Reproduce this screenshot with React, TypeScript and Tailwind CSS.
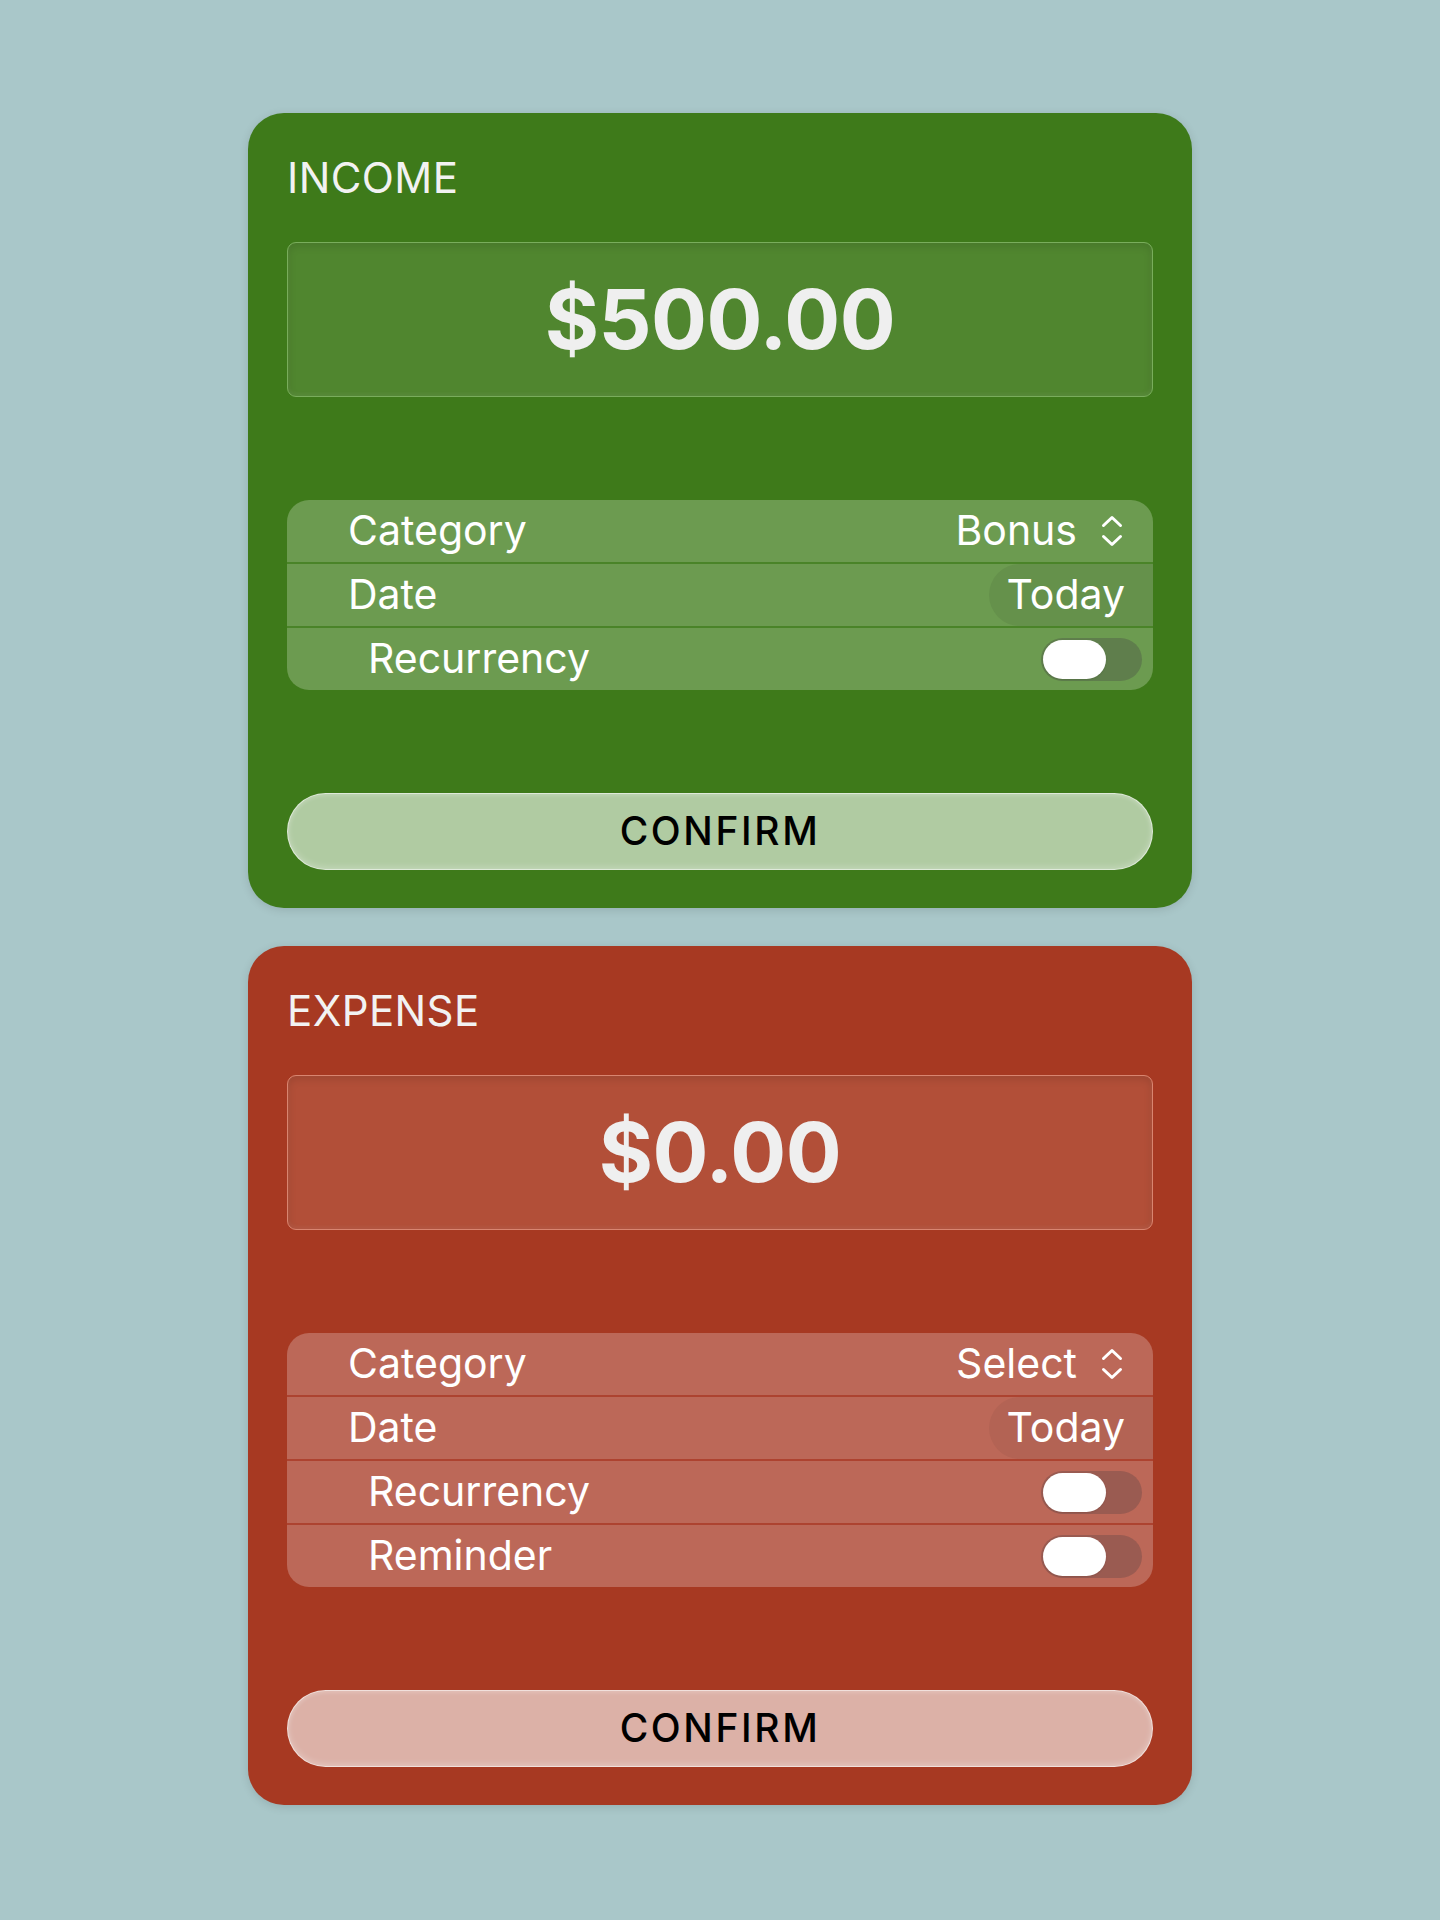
import React from "react";

type Theme = {
  card: string;
  box: string;
  list: string;
  sep: string;
  pill: string;
  track: string;
  button: string;
};

const green: Theme = {
  card: "bg-[#3e7a1a]",
  box: "bg-[#50862f] border-[#79ad5c]",
  list: "bg-[#6c9b50]",
  sep: "bg-[#4a8428]",
  pill: "bg-[#65914b]",
  track: "bg-[#5f7e4c]",
  button: "bg-[#b0cba2]",
};

const red: Theme = {
  card: "bg-[#a73922]",
  box: "bg-[#b24f38] border-[#d98570]",
  list: "bg-[#bc6858]",
  sep: "bg-[#ad4330]",
  pill: "bg-[#b36354]",
  track: "bg-[#9a5b51]",
  button: "bg-[#dcb1a7]",
};

function Chevrons() {
  return (
    <svg width="22" height="32" viewBox="0 0 22 32" fill="none" className="ml-[24px]">
      <path d="M2.5 10.5 L11 2.5 L19.5 10.5" stroke="white" strokeWidth="3" strokeLinecap="round" strokeLinejoin="round" />
      <path d="M2.5 21.5 L11 29.5 L19.5 21.5" stroke="white" strokeWidth="3" strokeLinecap="round" strokeLinejoin="round" />
    </svg>
  );
}

function Toggle({ t }: { t: Theme }) {
  return (
    <div className={`mr-[11px] flex h-[43px] w-[101px] items-center rounded-full px-[2px] ${t.track}`}>
      <div className="h-[39px] w-[63px] rounded-full bg-white shadow-[0_1px_2px_rgba(0,0,0,0.1)]" />
    </div>
  );
}

function Sep({ t }: { t: Theme }) {
  return <div className={`h-[2px] w-full ${t.sep}`} />;
}

function Card({
  title,
  amount,
  category,
  reminder,
  t,
}: {
  title: string;
  amount: string;
  category: string;
  reminder?: boolean;
  t: Theme;
}) {
  return (
    <div
      className={`w-[944px] rounded-[36px] px-[39px] pt-[40px] pb-[38px] text-white shadow-[0_2px_10px_rgba(0,0,0,0.12)] ${t.card}`}
    >
      <div className="text-[42px] leading-[50px] font-normal tracking-[0.4px] text-[#f2f2f2]">{title}</div>
      <div
        className={`mt-[39px] flex h-[155px] items-center justify-center rounded-[9px] border shadow-[inset_0_3px_8px_rgba(0,0,0,0.12),inset_0_-2px_4px_rgba(255,255,255,0.08)] ${t.box}`}
      >
        <span className="text-[83px] leading-none font-bold text-[#efefef] tracking-[-0.5px]">{amount}</span>
      </div>

      <div className={`mt-[103px] overflow-hidden rounded-[22px] ${t.list}`}>
        <div className="flex h-[62px] items-center pl-[61px] pr-[30px] text-[41px]">
          <span className="flex-1">Category</span>
          <span>{category}</span>
          <Chevrons />
        </div>
        <Sep t={t} />
        <div className="flex h-[62px] items-center pl-[61px] text-[41px]">
          <span className="flex-1">Date</span>
          <span className={`flex h-full items-center rounded-l-full pl-[18px] pr-[28px] ${t.pill}`}>Today</span>
        </div>
        <Sep t={t} />
        <div className="flex h-[62px] items-center pl-[81px] text-[41px]">
          <span className="flex-1">Recurrency</span>
          <Toggle t={t} />
        </div>
        {reminder && (
          <>
            <Sep t={t} />
            <div className="flex h-[62px] items-center pl-[81px] text-[41px]">
              <span className="flex-1">Reminder</span>
              <Toggle t={t} />
            </div>
          </>
        )}
      </div>

      <button
        className={`mt-[103px] flex h-[77px] w-full items-center justify-center rounded-full border border-white/60 text-[39px] font-medium tracking-[2.6px] text-black shadow-[inset_0_-2px_6px_rgba(255,255,255,0.25),inset_0_2px_4px_rgba(255,255,255,0.15)] ${t.button}`}
      >
        CONFIRM
      </button>
    </div>
  );
}

export default function App() {
  return (
    <div
      className="flex min-h-[1920px] w-full flex-col items-center gap-[38px] bg-[#a9c7c9] pt-[113px]"
      style={{ fontFamily: "Inter, 'Noto Sans', sans-serif" }}
    >
      <Card title="INCOME" amount="$500.00" category="Bonus" t={green} />
      <Card title="EXPENSE" amount="$0.00" category="Select" reminder t={red} />
    </div>
  );
}
